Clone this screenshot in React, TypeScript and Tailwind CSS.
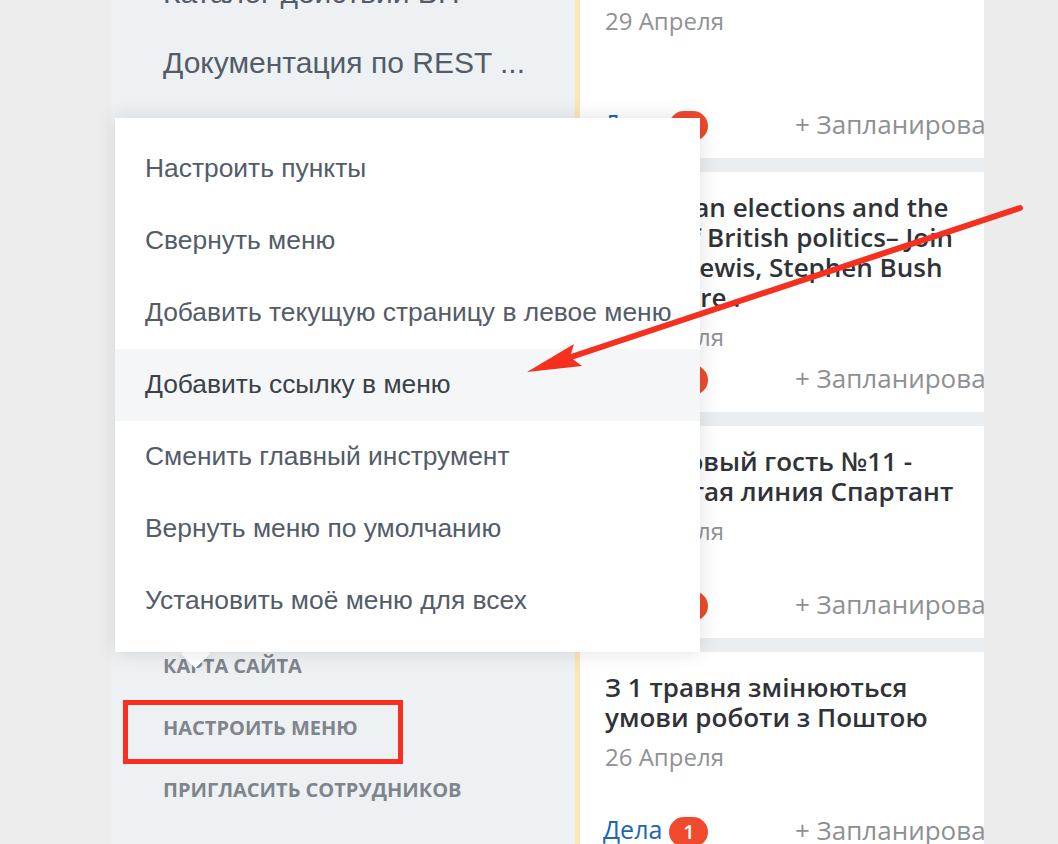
import React from "react";

type Card = {
  title: string;
  date: string;
  count: number;
};

const cards: Card[] = [
  { title: "Обновление Битрикс24", date: "29 Апреля", count: 2 },
  {
    title:
      "European elections and the state of British politics– Join Helen Lewis, Stephen Bush and more .",
    date: "27 Апреля",
    count: 3,
  },
  {
    title: "Наш новый гость №11 - Открытая линия Спартант",
    date: "27 Апреля",
    count: 1,
  },
  { title: "З 1 травня змінюються умови роботи з Поштою", date: "26 Апреля", count: 1 },
];

const menuItems = [
  "Настроить пункты",
  "Свернуть меню",
  "Добавить текущую страницу в левое меню",
  "Добавить ссылку в меню",
  "Сменить главный инструмент",
  "Вернуть меню по умолчанию",
  "Установить моё меню для всех",
];

const FeedCard: React.FC<{ card: Card }> = ({ card }) => {
  return (
    <div className="shrink-0 flex flex-col min-h-[212px] bg-white overflow-hidden pl-[23px] pt-[20px] pb-[16px] font-['Open_Sans',sans-serif]">
      <div className="pl-[2px] pr-[18px] text-[26px] leading-[30px] font-semibold text-[#2f3337]">
        {card.title}
      </div>
      <div className="pl-[2px] mt-[10px] text-[24px] leading-[30px] text-[#8f9295]">
        {card.date}
      </div>
      <div className="flex-1" />
      {/* footer */}
      <div className="flex items-center h-[36px] mt-[8px] whitespace-nowrap">
        <div className="flex items-center w-[192px] shrink-0">
          <span className="text-[25px] text-[#2066b0]">Дела</span>
          <span className="ml-[7px] mt-[3px] flex items-center justify-center w-[39px] h-[30px] rounded-full bg-[#ef4a2d] text-white text-[20px] font-semibold">
            {card.count}
          </span>
        </div>
        <span className="text-[26px] text-[#8d9093]">+ Запланировать</span>
      </div>
    </div>
  );
};

export default function App() {
  return (
    <div className="relative w-[1058px] h-[844px] overflow-hidden flex bg-[#ededed]">
      <div className="w-[111px] shrink-0 bg-[#ededed]" />

      {/* Left menu */}
      <aside className="w-[464px] shrink-0 flex flex-col bg-[#eef1f3]">
        <div className="mt-[-43px] pl-[52px] font-['Liberation_Sans',Arial,sans-serif] text-[30px] text-[#535c69]">
          <div className="h-[70px] flex items-center">Каталог действий ВП</div>
          <div className="h-[70px] flex items-center">Документация по REST ...</div>
        </div>
        <div className="flex-1" />
        <div className="pl-[52px] pb-[23px] font-['Open_Sans',sans-serif] text-[20px] font-bold text-[#7f858d] uppercase">
          <div className="h-[62px] flex items-center">Карта сайта</div>
          <div className="h-[62px] flex items-center">Настроить меню</div>
          <div className="h-[62px] flex items-center">Пригласить сотрудников</div>
        </div>
      </aside>

      <div className="w-[5px] shrink-0 bg-[#fce5b7]" />

      {/* Feed */}
      <main className="w-[404px] shrink-0 flex flex-col gap-[14px] mt-[-54px] bg-[#eaeef1]">
        {cards.map((c, i) => (
          <FeedCard key={i} card={c} />
        ))}
      </main>

      <div className="flex-1 bg-[#ececec]" />

      {/* Popup menu */}
      <div className="absolute left-[185px] top-[643px] w-[21px] h-[21px] rotate-45 bg-white shadow-[0_0_12px_rgba(0,0,0,0.12)]" />
      <div className="absolute left-[115px] top-[118px] w-[585px] py-[15px] bg-white shadow-[0_0_20px_rgba(0,0,0,0.12)] font-['Liberation_Sans',Arial,sans-serif]">
        {menuItems.map((item, i) => (
          <div
            key={i}
            className={
              i === 3
                ? "h-[72px] flex items-center pl-[30px] text-[26.4px] bg-[#f5f6f8] text-[#3b4149] whitespace-nowrap"
                : "h-[72px] flex items-center pl-[30px] text-[26.4px] text-[#535c69] whitespace-nowrap"
            }
          >
            {item}
          </div>
        ))}
      </div>

      {/* Highlight frame */}
      <div className="absolute left-[123px] top-[700px] w-[280px] h-[64px] border-[5px] border-[#fb2d1e]" />

      {/* Arrow */}
      <svg
        className="absolute left-0 top-0 pointer-events-none"
        width="1058"
        height="844"
        viewBox="0 0 1058 844"
      >
        <line
          x1="1020"
          y1="208"
          x2="565"
          y2="359"
          stroke="#f5301f"
          strokeWidth="6"
          strokeLinecap="round"
        />
        <polygon points="527,372 574,344 570,357 582,366" fill="#f5301f" />
      </svg>
    </div>
  );
}
